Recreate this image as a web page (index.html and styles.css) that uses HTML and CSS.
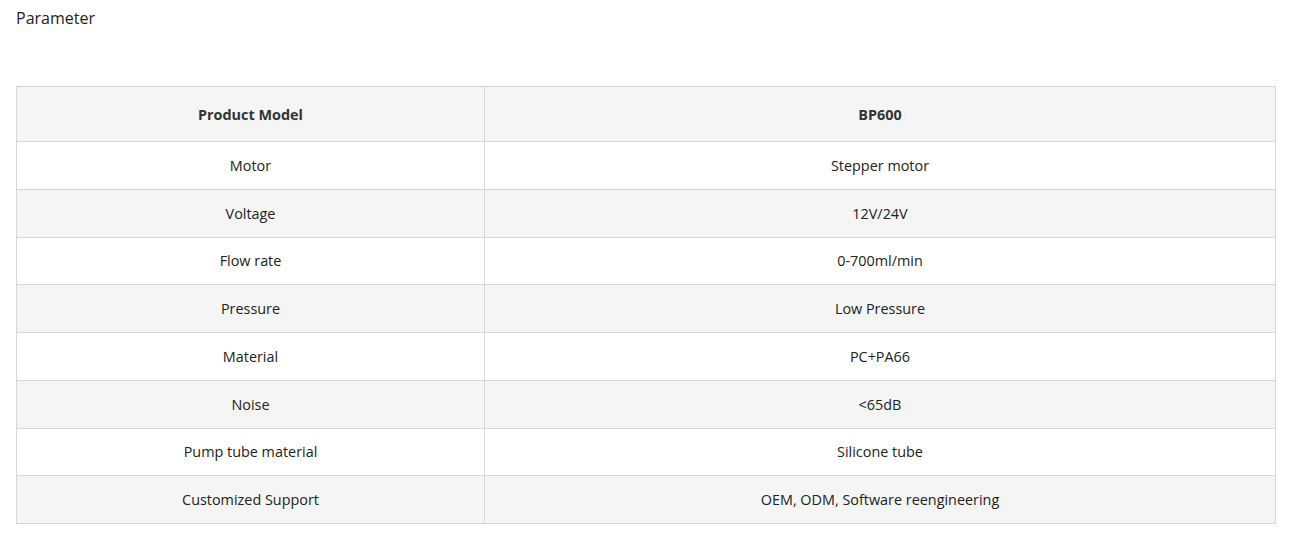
FILE: index.html
```html
<!DOCTYPE html>
<html lang="en">
<head>
<meta charset="utf-8">
<title>Parameter</title>
<link rel="stylesheet" href="styles.css">
</head>
<body>
<div class="page">
  <h3 class="title">Parameter</h3>
  <table class="spec">
    <thead>
      <tr class="alt"><th class="c1">Product Model</th><th>BP600</th></tr>
    </thead>
    <tbody>
      <tr><td>Motor</td><td>Stepper motor</td></tr>
      <tr class="alt"><td>Voltage</td><td>12V/24V</td></tr>
      <tr><td>Flow rate</td><td>0-700ml/min</td></tr>
      <tr class="alt"><td>Pressure</td><td>Low Pressure</td></tr>
      <tr><td>Material</td><td>PC+PA66</td></tr>
      <tr class="alt"><td>Noise</td><td>&lt;65dB</td></tr>
      <tr><td>Pump tube material</td><td>Silicone tube</td></tr>
      <tr class="alt"><td>Customized Support</td><td>OEM, ODM, Software reengineering</td></tr>
    </tbody>
  </table>
</div>
</body>
</html>
```
FILE: styles.css
```css
html, body {
  margin: 0;
  padding: 0;
  background: #fff;
}
body {
  font-family: "Open Sans", "Liberation Sans", sans-serif;
  color: #222;
}
.page {
  padding: 0 20px 0 16px;
}
.title {
  margin: 0;
  padding-top: 8px;
  font-size: 16px;
  line-height: 20px;
  font-weight: 500;
  color: #222;
}
.spec {
  margin-top: 58px;
  width: 1260px;
  border-collapse: collapse;
  font-size: 14.4px;
}
.spec th, .spec td {
  border: 1px solid #d6d6d6;
  text-align: center;
  vertical-align: middle;
  padding: 1px 0 0;
  line-height: 20px;
}
.spec th {
  height: 53px;
  font-weight: 700;
  color: #333;
}
.spec td {
  height: 45.75px;
}
.spec .c1 {
  width: 467px;
}
.spec tr.alt {
  background: #f5f5f5;
}
```
